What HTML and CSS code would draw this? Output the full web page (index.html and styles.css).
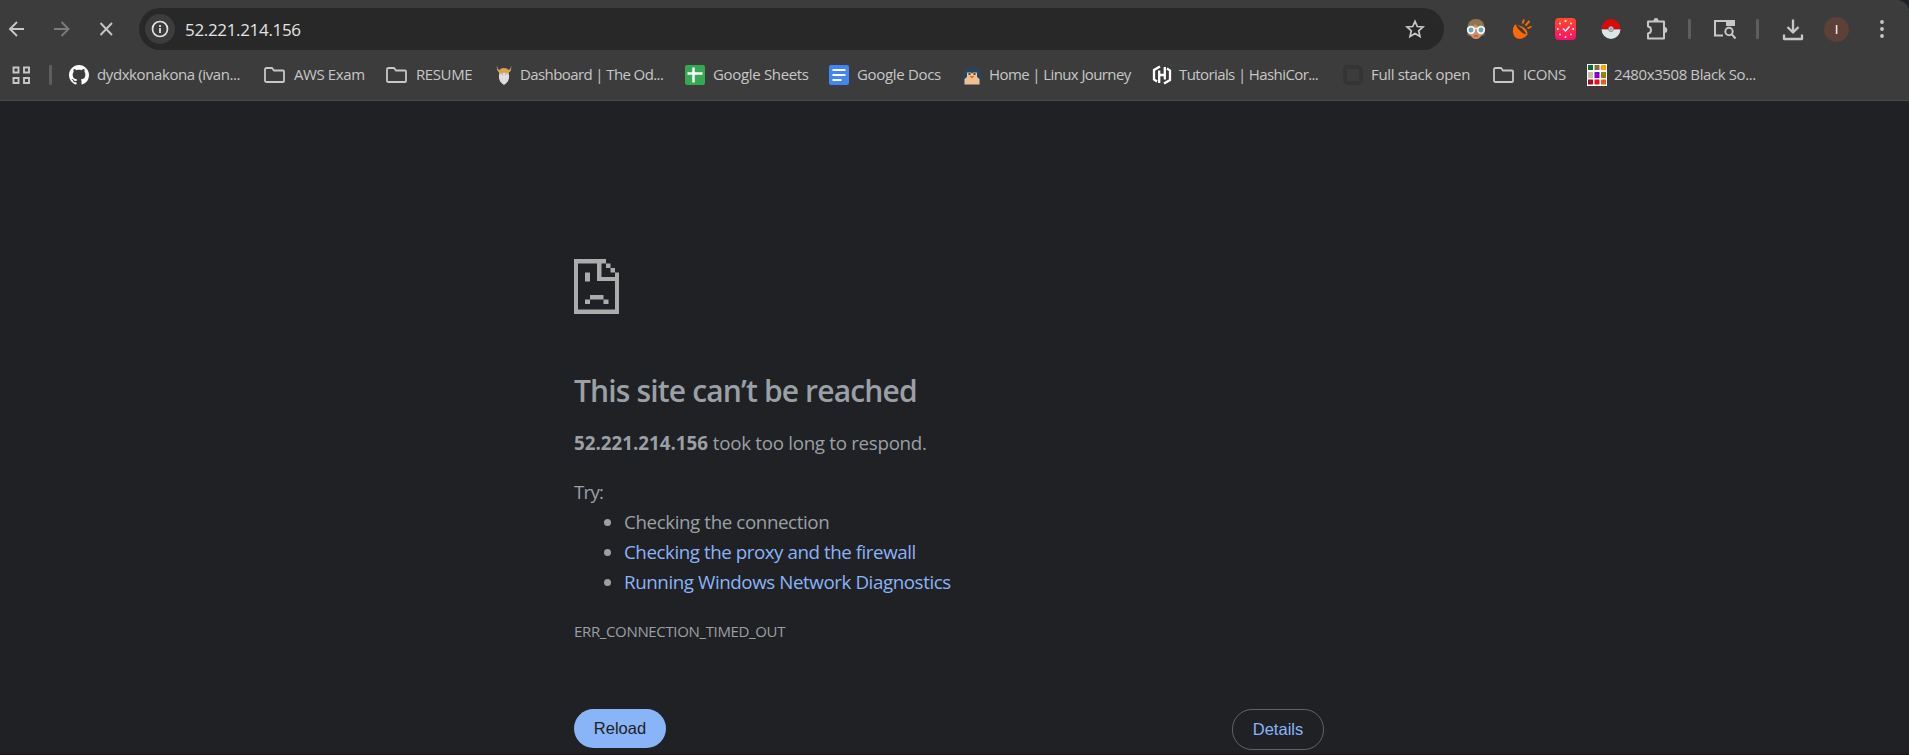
FILE: index.html
```html
<!DOCTYPE html>
<html lang="en">
<head>
<meta charset="utf-8">
<title>52.221.214.156</title>
<link rel="stylesheet" href="styles.css">
</head>
<body>
<header class="chrome">
  <div class="toolbar">
    <div class="nav">
      <svg class="ic" width="20" height="20" viewBox="0 0 20 20"><path d="M17 10H3.500M10 3L3 10l7 7" fill="none" stroke="#c7c7c7" stroke-width="1.9"/></svg>
      <svg class="ic" width="20" height="20" viewBox="0 0 20 20"><path d="M2 10H16M9.500 3l7 7-7 7" fill="none" stroke="#7c7c7c" stroke-width="1.9"/></svg>
      <svg class="ic" width="20" height="20" viewBox="0 0 20 20"><path d="M3.500 4l11.500 12M15 4L3.500 16" fill="none" stroke="#c7c7c7" stroke-width="1.9"/></svg>
    </div>
    <div class="omnibox">
      <span class="info"><svg width="18" height="18" viewBox="0 0 18 18"><circle cx="9" cy="9" r="7.500" fill="none" stroke="#e3e3e3" stroke-width="1.700"/><path d="M9 8v5M9 5v2" stroke="#e3e3e3" stroke-width="1.800"/></svg></span>
      <span class="url">52.221.214.156</span>
      <svg class="star" width="20" height="20" viewBox="0 0 20 20"><path d="M10 2.300l2.300 5.200 5.700.5-4.300 3.800 1.300 5.600-5-3-5 3 1.300-5.600L2 8l5.700-.5z" fill="none" stroke="#c7c7c7" stroke-width="1.700"/></svg>
    </div>
    <div class="actions">
      <svg class="a1" width="20" height="22" viewBox="0 0 20 22"><path d="M1.500 17V9C2 4 5 1 10 1s8 3 8.500 8v8l-3 1h-11z" fill="#8d7750"/><path d="M3.500 10q4-1 5-4 3 3 8 4v5q-2 6-6.500 6t-6.500-6z" fill="#cf9068"/><path d="M1 10.500h18" stroke="#e9f3f5" stroke-width="1.500"/><circle cx="5" cy="12" r="3.300" fill="#6fa3b4" stroke="#f3f7f7" stroke-width="1.700"/><circle cx="15" cy="12" r="3.300" fill="#6fa3b4" stroke="#f3f7f7" stroke-width="1.700"/><path d="M8 18h4" stroke="#b8503c" stroke-width="1.300"/></svg>
      <svg class="a2" width="20" height="22" viewBox="0 0 20 22"><path d="M3 6.500C-1 12 1 20 6.500 20.700c4.500.3 7-1.700 9-4.200Q16 9 3 6.500z" fill="#ff6a00"/><ellipse cx="9" cy="11.600" rx="6.500" ry="1.500" transform="rotate(44 9 11.600)" fill="#423c38"/><path d="M10.500 5.500l1.500-4M13.500 7.500l4-4.500M15.500 10.500l4-2" stroke="#ff6a00" stroke-width="1.900"/></svg>
      <svg class="a3" width="21" height="22" viewBox="0 0 21 22"><defs><linearGradient id="g" x2="0" y2="1"><stop stop-color="#ff4c27"/><stop offset="1" stop-color="#fb0e6a"/></linearGradient></defs><rect width="21" height="22" rx="4" fill="url(#g)"/><path d="M8 10.500l2.500 2.500L14.500 8.500" fill="none" stroke="#fff" stroke-width="1.400"/><g fill="#fff"><circle cx="10.500" cy="3" r="1"/><circle cx="10.500" cy="19" r="1"/><circle cx="2.800" cy="11" r="1"/><circle cx="18.200" cy="11" r="1"/><circle cx="5" cy="5.500" r=".9"/><circle cx="16" cy="5.500" r=".9"/><circle cx="5" cy="16.500" r=".9"/><circle cx="16" cy="16.500" r=".9"/></g></svg>
      <svg class="a4" width="20" height="22" viewBox="0 0 20 22"><path d="M.5 11a9.500 10 0 0 1 19 0z" fill="#dc0a0a"/><path d="M.5 11a9.500 10 0 0 0 19 0z" fill="#dce6ea"/><path d="M.5 11h19" stroke="#6c2424" stroke-width=".7"/><circle cx="10" cy="11" r="2.500" fill="#d5d5d5" stroke="#888"/><circle cx="10" cy="11" r="1" fill="#888"/></svg>
      <svg class="a5" width="22" height="24" viewBox="0 0 22 24"><path d="M2 4.500H18V21.500H2V16.500C6 16 6 10 2 9.500z" fill="none" stroke="#c7c7c7" stroke-width="2" stroke-linejoin="round"/><path d="M7.500 4a2.500 3 0 0 1 5 0zM18.500 10a2.800 3 0 0 1 0 6z" fill="#c7c7c7"/></svg>
      <i class="bar b1"></i>
      <svg class="a6" width="23" height="22" viewBox="0 0 23 22"><path d="M10 17.500H2V3H20V8" fill="none" stroke="#c7c7c7" stroke-width="2"/><path d="M13 2h9v6h-9z" fill="#c7c7c7"/><circle cx="16" cy="13.500" r="3.700" fill="none" stroke="#c7c7c7" stroke-width="2"/><path d="M18.500 16l4 4.500" stroke="#c7c7c7" stroke-width="2"/></svg>
      <i class="bar b2"></i>
      <svg class="a7" width="22" height="23" viewBox="0 0 22 23"><path d="M11 1.500v13M5.500 9L11 14.500 16.500 9M2 16.500V21H20V16.500" fill="none" stroke="#c7c7c7" stroke-width="2.300" stroke-linejoin="round"/></svg>
      <span class="avatar">I</span>
      <svg class="a8" width="4" height="20" viewBox="0 0 4 20"><g fill="#c7c7c7"><circle cx="2" cy="3" r="1.900"/><circle cx="2" cy="10" r="1.900"/><circle cx="2" cy="17" r="1.900"/></g></svg>
    </div>
  </div>
  <nav class="bookmarks">
    <svg class="apps" width="20" height="20" viewBox="0 0 20 20"><path d="M2.500 2.500h5v5h-5zM13 2.500h5v5h-5zM2.500 13h5v5h-5zM13 13h5v5h-5z" fill="none" stroke="#c7c7c7" stroke-width="1.900"/></svg>
    <i class="bar b3"></i>
    <a class="bm m1"><svg width="20" height="20" viewBox="0 0 16 16"><path fill="#fff" d="M8 0C3.580 0 0 3.580 0 8c0 3.540 2.290 6.530 5.470 7.590.4.070.55-.17.55-.38 0-.19-.01-.82-.01-1.490-2.010.37-2.530-.49-2.690-.94-.09-.23-.48-.94-.82-1.130-.28-.15-.68-.52-.01-.53.630-.01 1.080.58 1.230.82.720 1.210 1.870.87 2.330.66.070-.52.280-.87.510-1.070-1.780-.2-3.640-.89-3.640-3.950 0-.87.310-1.590.82-2.150-.08-.2-.36-1.020.08-2.120 0 0 .67-.21 2.200.82.640-.18 1.320-.27 2-.27s1.360.09 2 .27c1.530-1.040 2.200-.82 2.200-.82.440 1.100.16 1.920.08 2.120.51.560.82 1.270.82 2.150 0 3.070-1.870 3.750-3.650 3.950.29.250.54.730.54 1.480 0 1.070-.01 1.930-.01 2.200 0 .21.150.46.55.38A8.010 8.010 0 0 0 16 8c0-4.420-3.580-8-8-8z"/></svg><span>dydxkonakona (ivan...</span></a>
    <a class="bm m2"><svg width="21" height="20" viewBox="0 0 21 20"><path d="M1 15.500V4.500q0-1.500 1.500-1.500H8l2 2.500h9q1 0 1 1V16q0 1-1 1H2.500Q1 17 1 15.500z" fill="none" stroke="#c7c7c7" stroke-width="1.800"/></svg><span>AWS Exam</span></a>
    <a class="bm m3"><svg width="21" height="20" viewBox="0 0 21 20"><path d="M1 15.500V4.500q0-1.500 1.500-1.500H8l2 2.500h9q1 0 1 1V16q0 1-1 1H2.500Q1 17 1 15.500z" fill="none" stroke="#c7c7c7" stroke-width="1.800"/></svg><span>RESUME</span></a>
    <a class="bm m4"><svg width="20" height="20" viewBox="0 0 20 20"><path d="M3 .5q0 4 3 5 4-4 8 0 3-1 3-5 1 5-2 7H5Q2 5 3 .5z" fill="#e0b070"/><path d="M5 7q0-4 5-4t5 4v4H5z" fill="#dca050"/><path d="M5 10q2-3 5-2 3-1 5 2 1 6-5 10-6-4-5-10z" fill="#dedede"/><path d="M7.500 9h1M11.500 9h1" stroke="#765c48"/></svg><span>Dashboard | The Od...</span></a>
    <a class="bm m5"><svg width="20" height="20" viewBox="0 0 20 20"><rect width="20" height="20" rx="2" fill="#34a853"/><path d="M2.500 8.500h15M8.500 2.500v15" stroke="#fff" stroke-width="2.500"/></svg><span>Google Sheets</span></a>
    <a class="bm m6"><svg width="20" height="20" viewBox="0 0 20 20"><rect width="20" height="20" rx="2" fill="#4285f4"/><path d="M3.500 5h13M3.500 10h13M3.500 15h9" stroke="#fff" stroke-width="2.200"/></svg><span>Google Docs</span></a>
    <a class="bm m7"><svg width="20" height="20" viewBox="0 0 20 20"><path d="M1 19V9q1-7 9-7t9 7v10z" fill="#29435c"/><path d="M5 7.500h4l1 1 1-1h4V12l2.500 2v5.500h-15V14L5 12z" fill="#edc194"/><path d="M6.500 9h2M11.500 9h2" stroke="#222" stroke-width="1.300"/><path d="M7.500 11h5L10 13.500z" fill="#df603a"/></svg><span>Home | Linux Journey</span></a>
    <a class="bm m8"><svg width="20" height="20" viewBox="0 0 20 20"><g fill="none" stroke="#fff" stroke-width="2.300"><path d="M8 1.500L2 5v9.500l3 2M12 18.500l6-3.500V5.500l-3-2M7.200 5.500v12.500M12.800 2v12.500M7.200 10h5.600"/></g></svg><span>Tutorials | HashiCor...</span></a>
    <a class="bm m9"><svg width="20" height="20" viewBox="0 0 20 20"><rect x="1" y="1" width="16" height="16" rx="2" fill="none" stroke="#333" stroke-width="1.500"/><rect x="3" y="3" width="16" height="16" rx="2" fill="none" stroke="#333" stroke-width="1.500"/></svg><span>Full stack open</span></a>
    <a class="bm m10"><svg width="21" height="20" viewBox="0 0 21 20"><path d="M1 15.500V4.500q0-1.500 1.500-1.500H8l2 2.500h9q1 0 1 1V16q0 1-1 1H2.500Q1 17 1 15.500z" fill="none" stroke="#c7c7c7" stroke-width="1.800"/></svg><span>ICONS</span></a>
    <a class="bm m11"><svg width="20" height="22" viewBox="0 0 20 22"><path fill="#fff" d="M0 0h20v22H0z"/><path fill="#0b6b35" d="M1 1h5v5H1z"/><path fill="#80703a" d="M7.500 1h5v5h-5z"/><path fill="#ffa200" d="M14 1h5v5h-5z"/><path fill="#d0bd9d" d="M1 8h5v6H1z"/><path fill="#8600df" d="M7.500 8h5v6h-5z"/><path fill="#948600" d="M14 8h5v6h-5z"/><path fill="#a70d20" d="M1 15.500h5v5H1z"/><path fill="#f20d18" d="M7.500 15.500h5v5h-5z"/><path fill="#ee5a13" d="M14 15.500h5v5h-5z"/></svg><span>2480x3508 Black So...</span></a>
  </nav>
</header>
<main class="error">
  <svg class="sad" width="45" height="55" viewBox="0 0 45 55" fill="#acacac"><path d="M0 0H32V4.500H4V50.500H41V22H23V4.500H27.500V18H41V13.500H45V55H0z"/><path d="M32 4.500h4.500V9H32zM36.500 9H41v4.500h-4.500zM11 13.500h5v9h-5zM16 36h13.500v4.500H16zM11 40.500h5V45h-5zM29.500 40.500h5V45h-5z"/></svg>
  <h1><span>This site can’t be reached</span></h1>
  <p class="lead"><strong>52.221.214.156</strong> <span>took too long to respond.</span></p>
  <p class="try">Try:</p>
  <ul>
    <li><span class="l1">Checking the connection</span></li>
    <li><a class="l2">Checking the proxy and the firewall</a></li>
    <li><a class="l3">Running Windows Network Diagnostics</a></li>
  </ul>
  <p class="code"><span>ERR_CONNECTION_TIMED_OUT</span></p>
  <div class="buttons"><button class="reload">Reload</button><button class="details">Details</button></div>
</main>
<footer class="edge"></footer>
</body>
</html>
```
FILE: styles.css
```css
* { box-sizing: border-box; }
html { background: #202124; }
body { margin: 0; height: 755px; overflow: hidden; display: flex; flex-direction: column; background: #202124; color: #9aa0a6; font-family: "Open Sans", "Noto Sans", sans-serif; }
svg { display: block; flex: none; }
.chrome { height: 101px; flex: none; background: #3c3c3c; border-bottom: 1px solid #4a4a4a; border-top-right-radius: 12px; }
.toolbar { height: 58px; display: flex; align-items: center; }
.nav { display: flex; width: 139px; gap: 25px; padding-left: 7px; }
.omnibox { width: 1305px; height: 42px; border-radius: 21px; background: #282828; display: flex; align-items: center; padding-left: 6px; }
.info { width: 30px; height: 30px; border-radius: 50%; background: #3c3c3c; display: grid; place-items: center; }
.url { margin-left: 10px; color: #e3e3e3; font-size: 17px; letter-spacing: -0.33px; white-space: nowrap; }
.star { margin-left: auto; margin-right: 19px; }
.actions { display: flex; align-items: center; flex: none; }
.actions > * { flex: none; }
.a1 { margin-left: 22px; }
.a2 { margin-left: 26px; }
.a3 { margin-left: 23px; }
.a4 { margin-left: 25px; }
.a5 { margin-left: 25px; }
.a6 { margin-left: 22px; }
.a7 { margin-left: 23px; }
.bar { width: 3px; height: 20px; border-radius: 1px; background: #5e5e5e; flex: none; }
.b1 { margin-left: 20px; }
.b2 { margin-left: 20px; }
.avatar { width: 25px; height: 25px; margin-left: 20px; border-radius: 50%; background: #5d4037; color: #fff; font: 13px "Liberation Sans", sans-serif; display: grid; place-items: center; }
.a8 { margin-left: 31px; }
.bookmarks { height: 34px; display: flex; align-items: center; padding-left: 11px; }
.b3 { margin: 0 17px 0 18px; }
.bm { display: flex; align-items: center; flex: none; height: 30px; color: #c7c7c7; font-size: 15px; white-space: nowrap; }
.bm span { margin-left: 8px; padding-bottom: 2px; letter-spacing: -0.4px; }
.m1 { width: 195px; }
.m2 { width: 122px; }
.m3 { width: 108px; }
.m4 { width: 191px; }
.m5 { width: 144px; }
.m6 { width: 133px; }
.m7 { width: 190px; }
.m8 { width: 191px; }
.m9 { width: 150px; }
.m10 { width: 94px; }
.m2 span, .m3 span, .m10 span { margin-left: 9px; }
.m4 span { margin-left: 6px; letter-spacing: -0.6px; }
.m5 span, .m6 span { letter-spacing: -0.33px; }
.m7 span, .m8 span { margin-left: 7px; letter-spacing: -0.6px; }
.m9 span { margin-left: 8px; letter-spacing: -0.33px; }
.m11 span { margin-left: 7px; }
.error { width: 750px; margin: 157.500px 0 0 574px; font-size: 18.75px; }
h1 { margin: 54px 0 0; height: 45px; line-height: 45px; font-size: 30px; font-weight: 600; letter-spacing: -0.85px; white-space: nowrap; }
p { margin: 0; height: 30px; line-height: 30px; white-space: nowrap; }
.lead { margin-top: 15px; }
.lead span { letter-spacing: -0.3px; }
.try { margin-top: 19px; letter-spacing: -0.8px; }
ul { margin: 0; padding-left: 50px; }
li { height: 30px; line-height: 30px; white-space: nowrap; }
a { color: #8ab4f8; }
.l1 { letter-spacing: -0.4px; }
.l2 { letter-spacing: -0.45px; }
.l3 { letter-spacing: -0.42px; }
.code { margin-top: 19px; font-size: 15px; letter-spacing: -0.35px; }
.buttons { margin-top: 63px; display: flex; justify-content: space-between; align-items: flex-start; }
button { width: 92px; height: 39px; border: 0; border-radius: 20px; padding: 0; font: 16.500px "Liberation Sans", sans-serif; }
.reload { background: #8ab4f8; color: #202124; }
.details { height: 41px; background: transparent; color: #8ab4f8; border: 1px solid #5f6368; }
.edge { height: 2px; margin-top: auto; background: #1f1a1d; flex: none; }
```
